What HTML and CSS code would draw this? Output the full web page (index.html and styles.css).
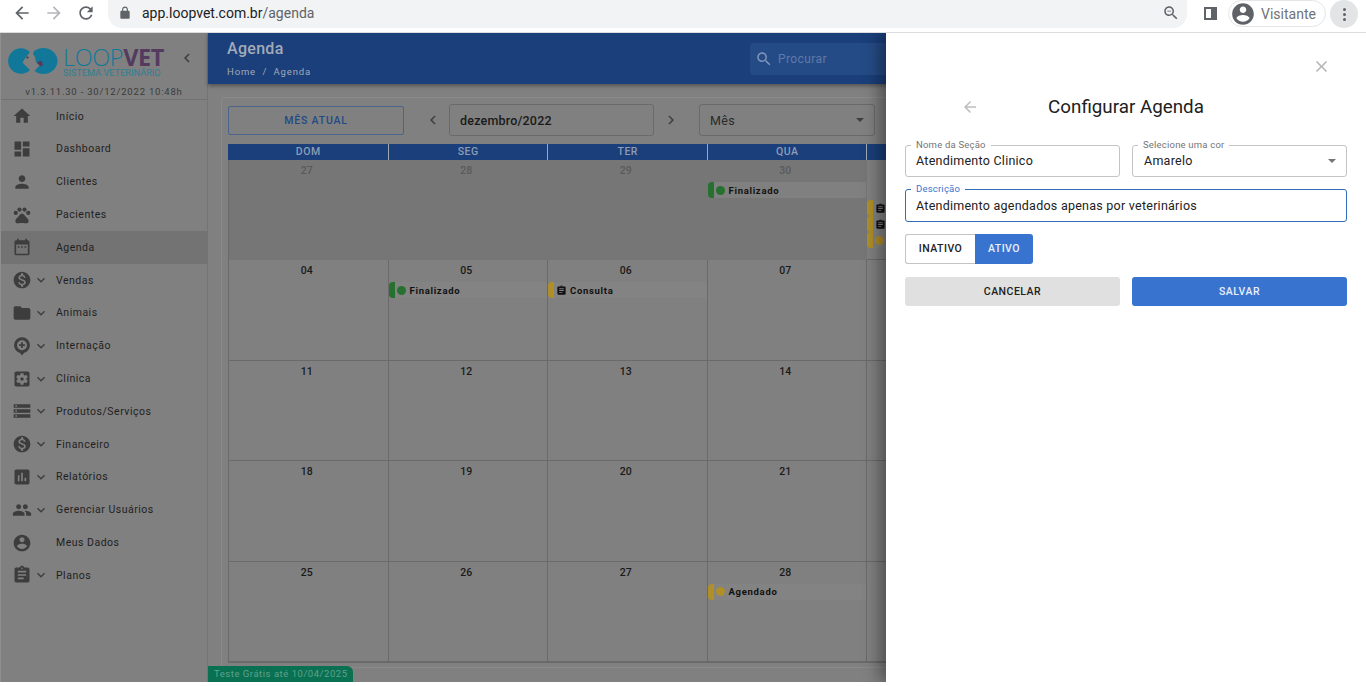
FILE: index.html
```html
<!DOCTYPE html>
<html lang="pt-BR">
<head>
    <meta charset="UTF-8">
    <meta name="viewport" content="width=device-width, initial-scale=1.0">
    <link rel="stylesheet" href="styles.css">
    <title>LoopVet - Agenda</title>
</head>
<body>

    <svg class="sprites" width="0" height="0">
        <symbol id="i-back" viewBox="0 0 24 24"><path d="M20 11H7.83l5.59-5.59L12 4l-8 8 8 8 1.41-1.41L7.83 13H20v-2z"/></symbol>
        <symbol id="i-forward" viewBox="0 0 24 24"><path d="M12 4l-1.41 1.41L16.17 11H4v2h12.17l-5.58 5.59L12 20l8-8z"/></symbol>
        <symbol id="i-reload" viewBox="0 0 24 24"><path d="M17.65 6.35C16.2 4.9 14.21 4 12 4c-4.42 0-7.99 3.58-7.99 8s3.57 8 7.99 8c3.73 0 6.84-2.55 7.73-6h-2.08c-.82 2.33-3.04 4-5.65 4-3.31 0-6-2.69-6-6s2.69-6 6-6c1.66 0 3.14.69 4.22 1.78L13 11h7V4l-2.35 2.35z"/></symbol>
        <symbol id="i-lock" viewBox="0 0 24 24"><path d="M18 8h-1V6c0-2.76-2.24-5-5-5S7 3.24 7 6v2H6c-1.1 0-2 .9-2 2v10c0 1.1.9 2 2 2h12c1.1 0 2-.9 2-2V10c0-1.1-.9-2-2-2zM9 6c0-1.66 1.34-3 3-3s3 1.34 3 3v2H9V6z"/></symbol>
        <symbol id="i-zoom" viewBox="0 0 24 24"><path d="M15.5 14h-.79l-.28-.27C15.41 12.59 16 11.11 16 9.5 16 5.91 13.09 3 9.5 3S3 5.91 3 9.5 5.91 16 9.5 16c1.61 0 3.09-.59 4.23-1.57l.27.28v.79l5 4.99L20.49 19l-4.99-5zm-6 0C7.01 14 5 11.99 5 9.5S7.01 5 9.5 5 14 7.01 14 9.5 11.99 14 9.5 14zM7 9h5v1H7z"/></symbol>
        <symbol id="i-search" viewBox="0 0 24 24"><path d="M15.5 14h-.79l-.28-.27C15.41 12.59 16 11.11 16 9.5 16 5.91 13.09 3 9.5 3S3 5.91 3 9.5 5.91 16 9.5 16c1.61 0 3.09-.59 4.23-1.57l.27.28v.79l5 4.99L20.49 19l-4.99-5zm-6 0C7.01 14 5 11.99 5 9.5S7.01 5 9.5 5 14 7.01 14 9.5 11.99 14 9.5 14z"/></symbol>
        <symbol id="i-left" viewBox="0 0 24 24"><path d="M15.41 7.41L14 6l-6 6 6 6 1.41-1.41L10.83 12z"/></symbol>
        <symbol id="i-right" viewBox="0 0 24 24"><path d="M10 6L8.59 7.41 13.17 12l-4.58 4.59L10 18l6-6z"/></symbol>
        <symbol id="i-down" viewBox="0 0 24 24"><path d="M16.59 8.59L12 13.17 7.41 8.59 6 10l6 6 6-6z"/></symbol>
        <symbol id="i-close" viewBox="0 0 24 24"><path d="M19 6.41L17.59 5 12 10.59 6.41 5 5 6.41 10.59 12 5 17.59 6.41 19 12 13.41 17.59 19 19 17.59 13.41 12z"/></symbol>
        <symbol id="i-home" viewBox="0 0 24 24"><path d="M10 20v-6h4v6h5v-8h3L12 3 2 12h3v8z"/></symbol>
        <symbol id="i-dashboard" viewBox="0 0 24 24"><path d="M3 13h8V3H3v10zm0 8h8v-6H3v6zm10 0h8V11h-8v10zm0-18v6h8V3h-8z"/></symbol>
        <symbol id="i-person" viewBox="0 0 24 24"><path d="M12 12c2.21 0 4-1.79 4-4s-1.79-4-4-4-4 1.79-4 4 1.79 4 4 4zm0 2c-2.67 0-8 1.34-8 4v2h16v-2c0-2.66-5.33-4-8-4z"/></symbol>
        <symbol id="i-pets" viewBox="0 0 24 24"><circle cx="4.5" cy="9.5" r="2.5"/><circle cx="9" cy="5.5" r="2.5"/><circle cx="15" cy="5.5" r="2.5"/><circle cx="19.5" cy="9.5" r="2.5"/><path d="M17.34 14.86c-.87-1.02-1.6-1.89-2.48-2.91-.46-.54-1.05-1.08-1.75-1.32-.11-.04-.22-.07-.33-.09-.25-.04-.52-.04-.78-.04s-.53 0-.79.05c-.11.02-.22.05-.33.09-.7.24-1.28.78-1.75 1.32-.87 1.02-1.6 1.89-2.48 2.91-1.31 1.31-2.92 2.76-2.62 4.79.29 1.02 1.02 2.03 2.33 2.32.73.15 3.06-.44 5.54-.44h.18c2.48 0 4.81.58 5.54.44 1.31-.29 2.04-1.31 2.33-2.32.31-2.04-1.3-3.49-2.61-4.8z"/></symbol>
        <symbol id="i-event" viewBox="0 0 24 24"><path d="M19 4h-1V2h-2v2H8V2H6v2H5c-1.1 0-2 .9-2 2v14c0 1.1.9 2 2 2h14c1.1 0 2-.9 2-2V6c0-1.1-.9-2-2-2zm0 16H5V9h14v11zM7 11h2v2H7zm4 0h2v2h-2zm4 0h2v2h-2z"/></symbol>
        <symbol id="i-money" viewBox="0 0 24 24"><path d="M12 2C6.48 2 2 6.48 2 12s4.48 10 10 10 10-4.48 10-10S17.52 2 12 2zm1.41 16.09V20h-2.67v-1.93c-1.71-.36-3.16-1.46-3.27-3.4h1.96c.1 1.05.82 1.87 2.65 1.87 1.96 0 2.4-.98 2.4-1.59 0-.83-.44-1.61-2.67-2.14-2.48-.6-4.18-1.62-4.18-3.67 0-1.72 1.39-2.84 3.11-3.21V4h2.67v1.95c1.86.45 2.79 1.86 2.85 3.39H14.3c-.05-1.11-.64-1.87-2.22-1.87-1.5 0-2.4.68-2.4 1.64 0 .84.65 1.39 2.67 1.91s4.18 1.39 4.18 3.91c-.01 1.83-1.38 2.83-3.12 3.16z"/></symbol>
        <symbol id="i-folder" viewBox="0 0 24 24"><path d="M10 4H4c-1.1 0-1.99.9-1.99 2L2 18c0 1.1.9 2 2 2h16c1.1 0 2-.9 2-2V8c0-1.1-.9-2-2-2h-8l-2-2z"/></symbol>
        <symbol id="i-hospital" viewBox="0 0 24 24"><path fill-rule="evenodd" d="M12 1.5A9.5 9.5 0 0 0 2.5 11c0 4.4 3 8 7 9.1l2.5 3.4 2.5-3.4c4-1.1 7-4.7 7-9.1A9.5 9.5 0 0 0 12 1.5zM12 5a6 6 0 1 1 0 12 6 6 0 0 1 0-12zM11 7.5V10H8.5v2H11v2.5h2V12h2.5v-2H13V7.5z"/></symbol>
        <symbol id="i-clinic" viewBox="0 0 24 24"><path d="M12 10c-1.1 0-2 .9-2 2s.9 2 2 2 2-.9 2-2-.9-2-2-2zm7-7H5c-1.11 0-2 .9-2 2v14c0 1.1.89 2 2 2h14c1.11 0 2-.9 2-2V5c0-1.1-.89-2-2-2zm-1.75 9c0 .23-.02.46-.05.68l1.48 1.16c.13.11.17.3.08.45l-1.4 2.42c-.09.15-.27.21-.43.15l-1.74-.7c-.36.28-.76.51-1.18.69l-.26 1.85c-.03.17-.18.3-.35.3h-2.8c-.17 0-.32-.13-.35-.29l-.26-1.85c-.43-.18-.82-.41-1.18-.69l-1.74.7c-.16.06-.34 0-.43-.15l-1.4-2.42c-.09-.15-.05-.34.08-.45l1.48-1.16c-.03-.23-.05-.46-.05-.69 0-.23.02-.46.05-.68l-1.48-1.16c-.13-.11-.17-.3-.08-.45l1.4-2.42c.09-.15.27-.21.43-.15l1.74.7c.36-.28.76-.51 1.18-.69l.26-1.85c.03-.17.18-.3.35-.3h2.8c.17 0 .32.13.35.29l.26 1.85c.43.18.82.41 1.18.69l1.74-.7c.16-.06.34 0 .43.15l1.4 2.42c.09.15.05.34-.08.45l-1.48 1.16c.03.23.05.46.05.69z"/></symbol>
        <symbol id="i-storage" viewBox="0 0 24 24"><path d="M2 20h20v-4H2v4zm2-3h2v2H4v-2zM2 4v4h20V4H2zm4 3H4V5h2v2zm-4 7h20v-4H2v4zm2-3h2v2H4v-2z"/></symbol>
        <symbol id="i-report" viewBox="0 0 24 24"><path d="M19 3H5c-1.1 0-2 .9-2 2v14c0 1.1.9 2 2 2h14c1.1 0 2-.9 2-2V5c0-1.1-.9-2-2-2zM9 17H7v-7h2v7zm4 0h-2V7h2v10zm4 0h-2v-4h2v4z"/></symbol>
        <symbol id="i-people" viewBox="0 0 24 24"><path d="M16 11c1.66 0 2.99-1.34 2.99-3S17.66 5 16 5c-1.66 0-3 1.34-3 3s1.34 3 3 3zm-8 0c1.66 0 2.99-1.34 2.99-3S9.66 5 8 5C6.34 5 5 6.34 5 8s1.34 3 3 3zm0 2c-2.33 0-7 1.17-7 3.5V19h14v-2.5c0-2.33-4.67-3.5-7-3.5zm8 0c-.29 0-.62.02-.97.05 1.16.84 1.97 1.97 1.97 3.45V19h6v-2.5c0-2.33-4.67-3.5-7-3.5z"/></symbol>
        <symbol id="i-account" viewBox="0 0 24 24"><path d="M12 2C6.48 2 2 6.48 2 12s4.48 10 10 10 10-4.48 10-10S17.52 2 12 2zm0 3c1.66 0 3 1.34 3 3s-1.34 3-3 3-3-1.34-3-3 1.34-3 3-3zm0 14.2c-2.5 0-4.71-1.28-6-3.22.03-1.99 4-3.08 6-3.08 1.99 0 5.97 1.09 6 3.08-1.29 1.94-3.5 3.22-6 3.22z"/></symbol>
        <symbol id="i-assign" viewBox="0 0 24 24"><path d="M19 3h-4.18C14.4 1.84 13.3 1 12 1c-1.3 0-2.4.84-2.82 2H5c-1.1 0-2 .9-2 2v14c0 1.1.9 2 2 2h14c1.1 0 2-.9 2-2V5c0-1.1-.9-2-2-2zm-7 0c.55 0 1 .45 1 1s-.45 1-1 1-1-.45-1-1 .45-1 1-1zm2 14H7v-2h7v2zm3-4H7v-2h10v2zm0-4H7V7h10v2z"/></symbol>
    </svg>

    <!-- barra do navegador -->
    <header class="browser">
        <svg class="chrome-icon nav-icon"><use href="#i-back"/></svg>
        <svg class="chrome-icon nav-icon nav-off"><use href="#i-forward"/></svg>
        <svg class="chrome-icon nav-icon"><use href="#i-reload"/></svg>
        <div class="omnibox">
            <svg class="lock"><use href="#i-lock"/></svg>
            <span class="url">app.loopvet.com.br<span class="url-path">/agenda</span></span>
            <svg class="zoom-icon"><use href="#i-zoom"/></svg>
        </div>
        <span class="side-panel"></span>
        <div class="profile">
            <svg class="profile-icon"><use href="#i-account"/></svg>
            <span>Visitante</span>
        </div>
        <div class="menu-dots"><i></i><i></i><i></i></div>
    </header>

    <div class="app">
        <aside class="sidebar">
            <div class="brand">
                <svg class="brand-mark" viewBox="0 0 50 26">
                    <path d="M22 4A12.8 12.8 0 1 0 22 22L14.5 14.5 17 10.5z" fill="#12789a"/>
                    <path d="M26 3C29 1 32 0 35.5 0 43 0 49.5 5.8 49.5 13S43 26 35.5 26c-3.3 0-6.5-1-9-3l6-6.5-4.5-2.5-1-5-2-3z" fill="#12789a"/>
                    <path d="M28.5 14.5l5-2 1.5 4.500-2.500 1.500z" fill="#553a60"/>
                    <circle cx="19.5" cy="9.5" r="1.1" fill="#3a3a3a"/>
                </svg>
                <div class="brand-text">
                    <div class="brand-name">LOOP<b>VET</b></div>
                    <div class="brand-sub">SISTEMA VETERINÁRIO</div>
                </div>
                <svg class="brand-back"><use href="#i-left"/></svg>
            </div>
            <div class="version">v1.3.11.30 - 30/12/2022 10:48h</div>
            <nav class="menu">
                <a class="menu-item"><svg class="menu-icon"><use href="#i-home"/></svg><span>Início</span></a>
                <a class="menu-item"><svg class="menu-icon"><use href="#i-dashboard"/></svg><span>Dashboard</span></a>
                <a class="menu-item"><svg class="menu-icon"><use href="#i-person"/></svg><span>Clientes</span></a>
                <a class="menu-item"><svg class="menu-icon"><use href="#i-pets"/></svg><span>Pacientes</span></a>
                <a class="menu-item active"><svg class="menu-icon"><use href="#i-event"/></svg><span>Agenda</span></a>
                <a class="menu-item has-sub"><svg class="menu-icon"><use href="#i-money"/></svg><svg class="menu-caret"><use href="#i-down"/></svg><span>Vendas</span></a>
                <a class="menu-item has-sub"><svg class="menu-icon"><use href="#i-folder"/></svg><svg class="menu-caret"><use href="#i-down"/></svg><span>Animais</span></a>
                <a class="menu-item has-sub"><svg class="menu-icon"><use href="#i-hospital"/></svg><svg class="menu-caret"><use href="#i-down"/></svg><span>Internação</span></a>
                <a class="menu-item has-sub"><svg class="menu-icon"><use href="#i-clinic"/></svg><svg class="menu-caret"><use href="#i-down"/></svg><span>Clínica</span></a>
                <a class="menu-item has-sub"><svg class="menu-icon"><use href="#i-storage"/></svg><svg class="menu-caret"><use href="#i-down"/></svg><span>Produtos/Serviços</span></a>
                <a class="menu-item has-sub"><svg class="menu-icon"><use href="#i-money"/></svg><svg class="menu-caret"><use href="#i-down"/></svg><span>Financeiro</span></a>
                <a class="menu-item has-sub"><svg class="menu-icon"><use href="#i-report"/></svg><svg class="menu-caret"><use href="#i-down"/></svg><span>Relatórios</span></a>
                <a class="menu-item has-sub"><svg class="menu-icon"><use href="#i-people"/></svg><svg class="menu-caret"><use href="#i-down"/></svg><span>Gerenciar Usuários</span></a>
                <a class="menu-item"><svg class="menu-icon"><use href="#i-account"/></svg><span>Meus Dados</span></a>
                <a class="menu-item has-sub"><svg class="menu-icon"><use href="#i-assign"/></svg><svg class="menu-caret"><use href="#i-down"/></svg><span>Planos</span></a>
            </nav>
        </aside>

        <main class="content">
            <div class="page-head">
                <div>
                    <h1>Agenda</h1>
                    <div class="crumbs">Home &nbsp;/&nbsp; Agenda</div>
                </div>
                <div class="search">
                    <svg><use href="#i-search"/></svg>
                    <span>Procurar</span>
                </div>
            </div>

            <section class="card">
                <div class="cal-tools">
                    <div class="btn-today">MÊS ATUAL</div>
                    <svg class="cal-arrow arrow-prev"><use href="#i-left"/></svg>
                    <div class="cal-field cal-month">dezembro/2022</div>
                    <svg class="cal-arrow arrow-next"><use href="#i-right"/></svg>
                    <div class="cal-field cal-view">Mês<i class="select-caret"></i></div>
                </div>

                <!-- quinta em diante fica atras do painel -->
                <div class="cal-head">
                    <div>DOM</div><div>SEG</div><div>TER</div><div>QUA</div><div></div>
                </div>
                <div class="cal-grid">
                    <div class="day out"><span class="num">27</span></div>
                    <div class="day out"><span class="num">28</span></div>
                    <div class="day out"><span class="num">29</span></div>
                    <div class="day out"><span class="num">30</span>
                        <div class="ev green"><i class="dot"></i>Finalizado</div>
                    </div>
                    <div class="day">
                        <div class="ev-gap"></div>
                        <div class="ev yellow"><svg class="ev-icon"><use href="#i-assign"/></svg></div>
                        <div class="ev yellow"><svg class="ev-icon"><use href="#i-assign"/></svg></div>
                        <div class="ev yellow"><i class="dot"></i></div>
                    </div>

                    <div class="day"><span class="num">04</span></div>
                    <div class="day"><span class="num">05</span>
                        <div class="ev green"><i class="dot"></i>Finalizado</div>
                    </div>
                    <div class="day"><span class="num">06</span>
                        <div class="ev yellow"><svg class="ev-icon"><use href="#i-assign"/></svg>Consulta</div>
                    </div>
                    <div class="day"><span class="num">07</span></div>
                    <div class="day"></div>

                    <div class="day"><span class="num">11</span></div>
                    <div class="day"><span class="num">12</span></div>
                    <div class="day"><span class="num">13</span></div>
                    <div class="day"><span class="num">14</span></div>
                    <div class="day"></div>

                    <div class="day"><span class="num">18</span></div>
                    <div class="day"><span class="num">19</span></div>
                    <div class="day"><span class="num">20</span></div>
                    <div class="day"><span class="num">21</span></div>
                    <div class="day"></div>

                    <div class="day"><span class="num">25</span></div>
                    <div class="day"><span class="num">26</span></div>
                    <div class="day"><span class="num">27</span></div>
                    <div class="day"><span class="num">28</span>
                        <div class="ev yellow"><i class="dot"></i>Agendado</div>
                    </div>
                    <div class="day"></div>
                </div>
            </section>

            <div class="trial">Teste Grátis até 10/04/2025</div>
        </main>

        <!-- painel lateral sobre a agenda -->
        <aside class="drawer">
            <svg class="drawer-close"><use href="#i-close"/></svg>
            <div class="drawer-title">
                <svg class="drawer-back"><use href="#i-back"/></svg>
                <h2>Configurar Agenda</h2>
            </div>
            <form class="form">
                <div class="field">
                    <label>Nome da Seção</label>
                    <div class="field-value">Atendimento Clinico</div>
                </div>
                <div class="field field-select">
                    <label>Selecione uma cor</label>
                    <div class="field-value">Amarelo</div>
                    <i class="select-caret"></i>
                </div>
                <div class="field field-wide focused">
                    <label>Descrição</label>
                    <div class="field-value">Atendimento agendados apenas por veterinários</div>
                </div>
                <div class="toggle field-wide">
                    <div class="toggle-off">INATIVO</div>
                    <div class="toggle-on">ATIVO</div>
                </div>
                <div class="btn btn-cancel">CANCELAR</div>
                <div class="btn btn-save">SALVAR</div>
            </form>
        </aside>
    </div>

</body>
</html>
```

FILE: styles.css
```css
* {
    box-sizing: border-box;
}

body {
    margin: 0;
    height: 686px;
    overflow: hidden;
    background: #fff;
    font-family: 'Roboto', sans-serif;
    color: #202124;
}

svg {
    fill: currentColor;
    display: block;
}

.sprites {
    position: absolute;
}

/* Barra do navegador */
.browser {
    height: 33px;
    display: flex;
    align-items: flex-start;
    background: #fff;
    border-bottom: 1px solid #dadce0;
    padding-left: 12px;
    color: #5f6368;
}

.nav-icon {
    width: 20px;
    height: 20px;
    margin: 3px 12px 0 0;
}

.nav-off {
    color: #b4b6b9;
}

.omnibox {
    width: 1079px;
    height: 28px;
    display: flex;
    align-items: center;
    background: #f1f3f4;
    border-radius: 0 0 14px 14px;
    padding: 0 7px 2px 10px;
}

.lock {
    width: 14px;
    height: 14px;
    margin-right: 10px;
}

.url {
    flex: 1;
    font-size: 14px;
    color: #202124;
}

.url-path {
    color: #5f6368;
}

.zoom-icon {
    width: 18px;
    height: 18px;
}

.side-panel {
    width: 13px;
    height: 13px;
    margin: 7px 0 0 17px;
    border: 2px solid #5f6368;
    border-right-width: 6px;
}

.profile {
    width: 98px;
    height: 27px;
    margin-left: 11px;
    display: flex;
    align-items: center;
    gap: 5px;
    border: 1px solid #e3e5e8;
    border-radius: 14px;
    padding-left: 1px;
    font-size: 14px;
    color: #6f7276;
}

.profile-icon {
    width: 26px;
    height: 26px;
    color: #5f6368;
}

.menu-dots {
    width: 28px;
    height: 28px;
    margin-left: 4px;
    display: flex;
    flex-direction: column;
    align-items: center;
    justify-content: center;
    gap: 2px;
    border-radius: 50%;
    background: #e3e4e6;
}

.menu-dots i {
    width: 3px;
    height: 3px;
    border-radius: 50%;
    background: #5f6368;
}

/* Aplicacao (escurecida atras do painel) */
.app {
    position: relative;
    height: 649px;
    display: flex;
    overflow: hidden;
    background: #808080;
}

.sidebar {
    width: 208px;
    flex-shrink: 0;
    border-left: 1px solid #8f8f8f;
    border-right: 1px solid #747474;
    background: #808080;
}

.brand {
    height: 47.8px;
    display: flex;
    align-items: flex-start;
    padding: 14px 0 0 7px;
}

.brand-mark {
    width: 50px;
    height: 26px;
    margin-top: 1px;
}

.brand-text {
    margin-left: 5px;
    width: 100px;
}

.brand-name {
    font-family: 'Open Sans', sans-serif;
    font-size: 23.5px;
    line-height: 20px;
    letter-spacing: -0.4px;
    font-weight: 300;
    white-space: nowrap;
    color: #12789a;
}

.brand-name b {
    font-weight: 700;
    color: #553a60;
}

.brand-sub {
    font-size: 9.2px;
    line-height: 11px;
    white-space: nowrap;
    color: #2f7f93;
}

.brand-back {
    width: 18px;
    height: 18px;
    margin: 2px 0 0 15px;
    color: #3c3c3c;
}

.version {
    height: 19px;
    font-size: 9.5px;
    line-height: 22px;
    text-align: center;
    letter-spacing: 0.8px;
    color: #3b3b3b;
    border-bottom: 1px solid #727272;
}

.menu-item {
    height: 32.8px;
    display: flex;
    align-items: center;
    position: relative;
    padding-left: 55px;
    font-size: 10.5px;
    letter-spacing: 0.5px;
    color: #1f1f1f;
}

.menu-item.active {
    background: #737373;
}

.menu-icon {
    position: absolute;
    left: 11px;
    width: 20px;
    height: 20px;
    color: #3d3d3d;
}

.menu-caret {
    position: absolute;
    left: 32px;
    width: 16px;
    height: 16px;
    color: #3d3d3d;
}

.content {
    flex: 1;
    position: relative;
    min-width: 0;
}

.page-head {
    height: 51px;
    display: flex;
    justify-content: space-between;
    padding: 7px 0 0 19px;
    background: #1a3f7a;
    box-shadow: 0 2px 4px rgba(0, 0, 0, 0.35);
    color: #a3aab8;
}

.page-head h1 {
    margin: 0;
    font-size: 16px;
    line-height: 18px;
    font-weight: 500;
    letter-spacing: 0.3px;
}

.crumbs {
    margin-top: 8px;
    font-size: 9.5px;
    letter-spacing: 0.85px;
}

.search {
    width: 616px;
    height: 32px;
    margin-top: 3px;
    display: flex;
    align-items: center;
    gap: 5px;
    padding-left: 5px;
    border-radius: 4px;
    background: #254b86;
    font-size: 12px;
    letter-spacing: 0.4px;
    color: #5f7aa8;
}

.search svg {
    width: 18px;
    height: 18px;
    color: #7f95bb;
}

.card {
    margin: 13px 0 0 13px;
    width: 1134px;
    height: 571px;
    padding: 6px 6px 0;
    border: 1px solid #8a8a8a;
    border-radius: 3px;
}

.cal-tools {
    height: 32px;
    display: flex;
    align-items: center;
}

.btn-today {
    width: 176px;
    height: 29px;
    line-height: 27px;
    text-align: center;
    font-size: 10.5px;
    font-weight: 500;
    letter-spacing: 0.8px;
    color: #234a85;
    border: 1px solid #4a648c;
    border-radius: 2px;
}

.cal-arrow {
    width: 18px;
    height: 18px;
    color: #3f3f3f;
}

.arrow-prev {
    margin: 0 7px 0 20px;
}

.arrow-next {
    margin: 0 19px 0 8px;
}

.cal-field {
    height: 32px;
    line-height: 32px;
    padding-left: 10px;
    border: 1px solid #6a6a6a;
    border-radius: 3px;
    position: relative;
    font-size: 12.5px;
    letter-spacing: 0.3px;
    color: #2a2a2a;
}

.cal-month {
    width: 205px;
    font-weight: 500;
    letter-spacing: 0.2px;
    color: #1a1a1a;
}

.cal-view {
    width: 176px;
}

.select-caret {
    position: absolute;
    right: 10px;
    top: 50%;
    margin-top: -2px;
    border-left: 4px solid transparent;
    border-right: 4px solid transparent;
    border-top: 4.5px solid #757575;
}

.cal-view .select-caret {
    border-top-color: #3f3f3f;
}

.cal-head {
    margin-top: 8px;
    height: 16px;
    display: grid;
    grid-template-columns: repeat(7, 159.5px);
    background: #1a3f7a;
}

.cal-head div {
    padding-left: 1px;
    font-size: 10.5px;
    line-height: 16px;
    font-weight: 500;
    letter-spacing: 0.5px;
    text-align: center;
    color: #8e9db5;
}

.cal-head div + div {
    border-left: 1px solid #a0a8b5;
}

.cal-grid {
    display: grid;
    grid-template-columns: repeat(5, 159.5px);
    grid-template-rows: repeat(5, 100.4px);
    border-bottom: 1px solid #6a6a6a;
    border-left: 1px solid #6a6a6a;
}

.day {
    min-width: 0;
    overflow: hidden;
    text-align: center;
    padding-top: 5px;
    border-right: 1px solid #6a6a6a;
    border-bottom: 1px solid #6a6a6a;
}

.day.out {
    background: #767676;
    border-color: #767676;
}

.num {
    display: block;
    height: 17px;
    padding-right: 3px;
    font-size: 10.5px;
    line-height: 12px;
    font-weight: 500;
    color: #1a1a1a;
}

.out .num {
    color: #5a5a5a;
}

.ev-gap {
    height: 35px;
}

.ev {
    height: 16px;
    display: flex;
    align-items: center;
    padding-left: 2px;
    background: rgba(255, 255, 255, 0.025);
    font-size: 9.5px;
    font-weight: 700;
    letter-spacing: 0.7px;
    text-align: left;
    color: #111;
    border-left: 6px solid;
    border-radius: 4px 0 0 4px;
}

.out .ev {
    background: #808080;
}

.ev .dot {
    width: 9px;
    height: 9px;
    margin-right: 4px;
    border-radius: 50%;
    flex-shrink: 0;
}

.ev.green {
    border-left-color: #267030;
}

.ev.green .dot {
    background: #267030;
}

.ev.yellow {
    border-left-color: #b08f28;
}

.ev.yellow .dot {
    background: #b08f28;
}

.ev-icon {
    width: 11px;
    height: 11px;
    margin-right: 3px;
    flex-shrink: 0;
    color: #111;
}

.trial {
    position: absolute;
    left: 0;
    bottom: 0;
    width: 145px;
    height: 16px;
    padding-left: 6px;
    font-size: 9.5px;
    line-height: 16px;
    letter-spacing: 0.53px;
    white-space: nowrap;
    border-radius: 0 6px 0 0;
    background: #0a7052;
    color: #5fa28d;
}

/* Painel lateral */
.drawer {
    position: absolute;
    top: 0;
    right: 0;
    width: 480px;
    height: 649px;
    padding: 0 19px;
    background: #fff;
    box-shadow: -6px 0 16px rgba(0, 0, 0, 0.4);
}

.drawer-close {
    position: absolute;
    top: 24px;
    left: 426px;
    width: 19px;
    height: 19px;
    color: #b5b5b5;
}

.drawer-title {
    position: relative;
    height: 112px;
    padding-top: 63px;
    text-align: center;
}

.drawer-title h2 {
    margin: 0;
    font-size: 18.8px;
    line-height: 22px;
    font-weight: 400;
    color: #212121;
}

.drawer-back {
    position: absolute;
    left: 56px;
    top: 65px;
    width: 18px;
    height: 18px;
    color: #bdbdbd;
}

.form {
    display: grid;
    grid-template-columns: 215px 215px;
    column-gap: 12px;
}

.field {
    position: relative;
    height: 32px;
    margin-bottom: 12px;
    padding: 7px 0 0 10px;
    border: 1px solid #c4c4c4;
    border-radius: 3px;
}

.field-wide {
    grid-column: 1 / 3;
}

.field label {
    position: absolute;
    left: 5px;
    top: -7px;
    padding: 0 5px;
    background: #fff;
    font-size: 9.5px;
    line-height: 11px;
    letter-spacing: 0.2px;
    color: #757575;
}

.field-value {
    font-size: 12.5px;
    line-height: 15px;
    letter-spacing: 0.25px;
    color: #212121;
}

.field-select {
    padding-left: 11px;
}

.focused {
    height: 33px;
    padding-top: 8px;
    border-color: #2f6fb5;
}

.focused label {
    color: #3874cf;
}

.toggle {
    display: flex;
    height: 30px;
    margin-bottom: 13px;
    font-size: 10.5px;
    font-weight: 500;
    letter-spacing: 0.5px;
    text-align: center;
    line-height: 28px;
}

.toggle-off {
    width: 70px;
    border: 1px solid #c4c4c4;
    border-right: 0;
    border-radius: 3px 0 0 3px;
    color: #212121;
}

.toggle-on {
    width: 58px;
    line-height: 30px;
    border-radius: 0 3px 3px 0;
    background: #3874cf;
    color: #e8eefa;
}

.btn {
    height: 29px;
    line-height: 29px;
    text-align: center;
    font-size: 10.5px;
    font-weight: 500;
    letter-spacing: 0.5px;
    border-radius: 3px;
}

.btn-cancel {
    background: #e0e0e0;
    color: #212121;
}

.btn-save {
    background: #3874cf;
    color: #e8eefa;
}
```
